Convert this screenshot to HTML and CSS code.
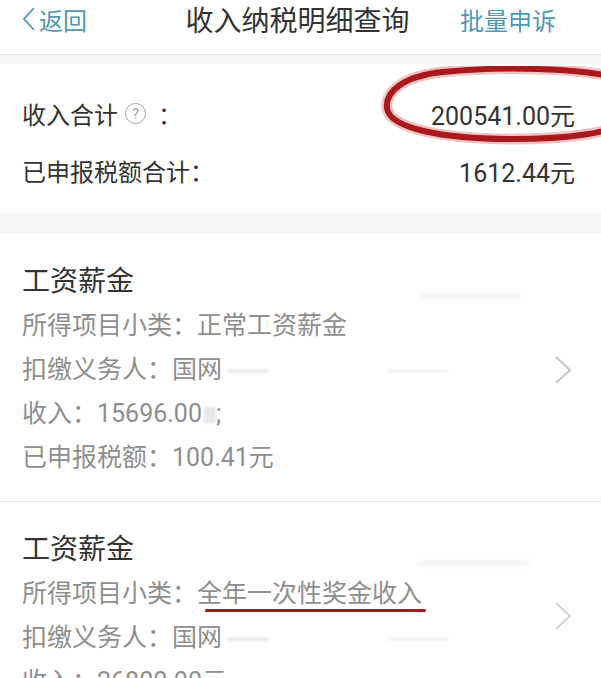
FILE: index.html
```html
<!DOCTYPE html>
<html lang="zh">
<head>
<meta charset="utf-8">
<title>收入纳税明细查询</title>
<link rel="stylesheet" href="styles.css">
</head>
<body>
<div class="page">
  <header class="topbar">
    <div class="back"><svg class="back-arrow" width="14" height="24" viewBox="0 0 14 24"><polyline points="12,1 2,12 12,23" fill="none" stroke="#4f98b3" stroke-width="1.8"/></svg>返回</div>
    <div class="title">收入纳税明细查询</div>
    <div class="action">批量申诉</div>
  </header>
  <div class="gap-top"></div>
  <section class="summary">
    <div class="sum-row">
      <div class="sum-label">收入合计<span class="help">?</span>：</div>
      <div class="sum-value">200541.00元</div>
    </div>
    <div class="sum-row">
      <div class="sum-label">已申报税额合计：</div>
      <div class="sum-value">1612.44元</div>
    </div>
    <svg class="circle-mark" width="240" height="80" viewBox="0 0 240 80">
      <path d="M236 12 C200 2 120 0 62 6 C22 10 4 26 6 42 C8 62 60 73 132 73 C192 73 228 66 240 58" fill="none" stroke="#f1c4c4" stroke-width="11" stroke-linecap="round"/>
      <path d="M236 12 C200 2 120 0 62 6 C22 10 4 26 6 42 C8 62 60 73 132 73 C192 73 228 66 240 58" fill="none" stroke="#a8181c" stroke-width="6" stroke-linecap="round"/>
    </svg>
  </section>
  <div class="gap-mid"></div>
  <section class="card">
    <div class="card-body">
      <div class="card-title">工资薪金</div>
      <div class="line">所得项目小类：正常工资薪金</div>
      <div class="line">扣缴义务人：国网<span class="blur blur-a"></span><span class="blur blur-b"></span></div>
      <div class="line">收入：15696.00<span class="blur blur-c"></span>;</div>
      <div class="line">已申报税额：100.41元</div>
    </div>
    <svg class="chev" width="18" height="30" viewBox="0 0 18 30"><polyline points="2,2 16,15 2,28" fill="none" stroke="#c4c4c4" stroke-width="2"/></svg>
    <span class="smudge smudge-1"></span>
  </section>
  <section class="card card-2">
    <div class="card-body">
      <div class="card-title">工资薪金</div>
      <div class="line">所得项目小类：<span class="underlined">全年一次性奖金收入</span></div>
      <div class="line">扣缴义务人：国网<span class="blur blur-a"></span><span class="blur blur-b"></span></div>
      <div class="line">收入：26800.00元</div>
    </div>
    <svg class="chev chev-faint" width="18" height="30" viewBox="0 0 18 30"><polyline points="2,2 16,15 2,28" fill="none" stroke="#d2d2d2" stroke-width="2"/></svg>
    <span class="smudge smudge-2"></span>
  </section>
</div>
</body>
</html>
```
FILE: styles.css
```css
html, body {
  margin: 0;
  padding: 0;
  background: #ffffff;
}
.page {
  width: 601px;
  height: 678px;
  overflow: hidden;
  font-family: Roboto, "Noto Sans CJK SC", sans-serif;
  color: #333333;
  background: #ffffff;
}
.topbar {
  height: 55px;
  box-sizing: border-box;
  display: flex;
  align-items: center;
  justify-content: space-between;
  padding: 0 45px 16px 22px;
  border-bottom: 1px solid #e6e6e8;
}
.back {
  font-size: 24px;
  color: #4f98b3;
  display: flex;
  align-items: center;
}
.back-arrow {
  margin-right: 3px;
}
.title {
  font-size: 28px;
  color: #333333;
  margin-left: 48px;
}
.action {
  font-size: 24px;
  color: #4f98b3;
}
.gap-top {
  height: 9px;
  background: #f6f6f8;
}
.summary {
  position: relative;
  background: #ffffff;
  padding: 21px 26px 14px 22px;
}
.sum-row {
  display: flex;
  justify-content: space-between;
  align-items: center;
  height: 57px;
  color: #333333;
}
.sum-label {
  font-size: 24px;
  display: flex;
  align-items: center;
}
.sum-value {
  font-size: 25px;
}
.help {
  display: inline-flex;
  align-items: center;
  justify-content: center;
  width: 19px;
  height: 19px;
  border: 1.5px solid #a0a0a0;
  border-radius: 50%;
  font-size: 14px;
  color: #a0a0a0;
  margin: 0 12px 0 7px;
}
.circle-mark {
  position: absolute;
  left: 381px;
  top: 2px;
}
.gap-mid {
  height: 21px;
  background: #f6f6f8;
}
.card {
  position: relative;
  display: flex;
  align-items: center;
  padding: 26px 29px 21px 22px;
  border-bottom: 1px solid #e4e4e4;
}
.card-body {
  flex: 1;
}
.card-title {
  font-size: 28px;
  line-height: 44px;
  color: #333333;
}
.line {
  font-size: 25px;
  line-height: 44px;
  color: #8e8e8e;
  white-space: nowrap;
}
.blur {
  display: inline-block;
  height: 2px;
  background: #d8d8d8;
  filter: blur(1.5px);
  vertical-align: middle;
}
.blur-a {
  width: 40px;
  margin-left: 6px;
}
.blur-b {
  width: 60px;
  margin-left: 120px;
  opacity: 0.6;
}
.blur-c {
  width: 12px;
  height: 16px;
  margin-left: 2px;
  background: #dcdcdc;
  opacity: 0.7;
}
.chev {
  flex: none;
}
.underlined {
  position: relative;
}
.underlined::after {
  content: "";
  position: absolute;
  left: 8px;
  right: -4px;
  bottom: -4px;
  height: 3px;
  border-radius: 2px;
  background: #a8181c;
}
.smudge {
  position: absolute;
  height: 3px;
  background: #e2e2e2;
  filter: blur(2px);
  opacity: 0.7;
}
.smudge-1 {
  left: 420px;
  top: 60px;
  width: 100px;
}
.smudge-2 {
  left: 420px;
  top: 60px;
  width: 110px;
}
```
